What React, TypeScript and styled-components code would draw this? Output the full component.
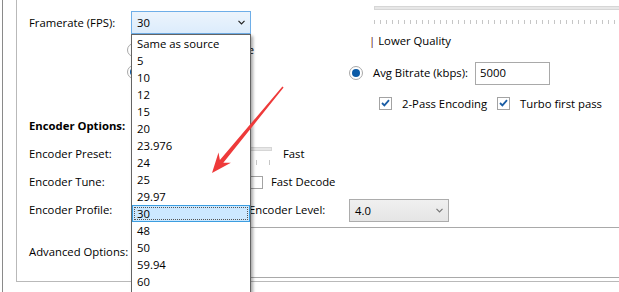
import React from "react";
import styled, { createGlobalStyle } from "styled-components";

const GlobalStyle = createGlobalStyle`
  html, body {
    margin: 0;
    padding: 0;
    background: #fff;
  }
  body {
    width: 619px;
    height: 292px;
    overflow: hidden;
    font-family: "Open Sans", "Noto Sans", sans-serif;
    font-size: 11.3px;
    color: #000;
  }
`;

const Stage = styled.div`
  position: relative;
  width: 619px;
  height: 292px;
  overflow: hidden;
`;

const Window = styled.div`
  margin-left: 2px;
  height: 292px;
  border-left: 1px solid #8a8a8a;
`;

const GroupBox = styled.div`
  margin-left: 13px;
  height: 281px;
  padding-left: 12px;
  border-left: 1px solid #b9b9b9;
  border-bottom: 1px solid #b9b9b9;
`;

const Top = styled.div`
  display: flex;
  height: 115px;
`;

const LeftPane = styled.div`
  width: 320px;
  flex-shrink: 0;
  display: flex;
  flex-direction: column;
`;

const RightPane = styled.div`
  flex: 1;
  min-width: 0;
  display: flex;
  flex-direction: column;
`;

const FieldRow = styled.div`
  margin-top: 11px;
  height: 23px;
  display: flex;
  align-items: center;
`;

const Label = styled.div<{ $w?: number }>`
  width: ${(p) => (p.$w ? `${p.$w}px` : "auto")};
  flex-shrink: 0;
  white-space: nowrap;
  line-height: 16px;
  align-self: center;
`;

const Heading = styled(Label)`
  font-weight: 700;
  grid-column: 1 / -1;
`;

const Combo = styled.div<{ $open?: boolean; $w: number; $h?: number }>`
  position: relative;
  box-sizing: border-box;
  width: ${(p) => p.$w}px;
  height: ${(p) => p.$h ?? 22}px;
  flex-shrink: 0;
  display: flex;
  align-items: center;
  justify-content: space-between;
  padding: 0 5px;
  border: 1px solid ${(p) => (p.$open ? "#6eaee8" : "#acacac")};
  background: ${(p) =>
    p.$open
      ? "linear-gradient(#ecf4fc, #dcecfc)"
      : "linear-gradient(#f0f0f0, #e5e5e5)"};
  color: #000;
`;

const Chevron = ({ color = "#222" }: { color?: string }) => (
  <svg width="7" height="5" viewBox="0 0 7 5">
    <polyline points="0.5,0.8 3.5,3.8 6.5,0.8" fill="none" stroke={color} strokeWidth="1.2" />
  </svg>
);

const DropList = styled.ul`
  position: absolute;
  left: -1px;
  top: calc(100% + 1px);
  width: 120px;
  box-sizing: border-box;
  margin: 0;
  padding: 0;
  list-style: none;
  background: #fff;
  border: 1px solid #646464;
  box-shadow: 2px 2px 3px rgba(0, 0, 0, 0.35);
  z-index: 5;
`;

const DropItem = styled.li<{ $selected?: boolean }>`
  position: relative;
  box-sizing: border-box;
  height: 17px;
  line-height: 17px;
  padding-left: 5px;
  white-space: nowrap;
  ${(p) =>
    p.$selected &&
    `
    background: #cce8ff;
    box-shadow: inset 0 0 0 1px #3d9ee0;
    &::after {
      content: "";
      position: absolute;
      inset: 2px;
      border: 1px dotted #555;
    }
  `}
`;

const RadioRow = styled.div<{ $mt?: number }>`
  margin-top: ${(p) => p.$mt ?? 0}px;
  margin-left: 98px;
  height: 22px;
  display: flex;
  align-items: center;
  gap: 8px;
`;

const Radio = styled.span<{ $checked?: boolean }>`
  box-sizing: border-box;
  width: 14px;
  height: 14px;
  flex-shrink: 0;
  border-radius: 50%;
  border: 1px solid #a8a8a8;
  background: #fff;
  display: flex;
  align-items: center;
  justify-content: center;
  &::after {
    content: "";
    width: 8px;
    height: 8px;
    border-radius: 50%;
    background: ${(p) => (p.$checked ? "#0b5aa6" : "transparent")};
  }
`;

const SliderTrack = styled.div<{ $w: number; $mt: number; $ml?: number }>`
  box-sizing: border-box;
  width: ${(p) => p.$w}px;
  height: 4px;
  margin-top: ${(p) => p.$mt}px;
  margin-left: ${(p) => p.$ml ?? 0}px;
  border: 1px solid #d6d6d6;
  background: #e7e7e7;
  flex-shrink: 0;
`;

const Ticks = styled.div<{ $w: number; $mt: number; $ml?: number; $step: number; $h: number; $fromRight?: boolean }>`
  width: ${(p) => p.$w}px;
  height: ${(p) => p.$h}px;
  margin-top: ${(p) => p.$mt}px;
  margin-left: ${(p) => p.$ml ?? 0}px;
  background: repeating-linear-gradient(
    ${(p) => (p.$fromRight ? "to left" : "to right")},
    transparent 0 ${(p) => (p.$fromRight ? 2 : 0)}px,
    #c6c6c6 ${(p) => (p.$fromRight ? 2 : 0)}px ${(p) => (p.$fromRight ? 3 : 1)}px,
    transparent ${(p) => (p.$fromRight ? 3 : 1)}px ${(p) => p.$step}px
  );
`;

const Note = styled.div`
  margin-top: 9px;
  margin-left: 20px;
  line-height: 16px;
  white-space: nowrap;
  span {
    color: #5a1010;
    margin-right: 3px;
  }
`;

const BitrateRow = styled.div`
  margin-top: 13px;
  height: 22px;
  display: flex;
  align-items: center;
`;

const TextBox = styled.div<{ $w: number; $h: number }>`
  box-sizing: border-box;
  width: ${(p) => p.$w}px;
  height: ${(p) => p.$h}px;
  flex-shrink: 0;
  border: 1px solid #a9a9a9;
  background: #fff;
  padding: 2px 4px;
  line-height: 16px;
`;

const CheckRow = styled.div`
  margin-top: 11px;
  margin-left: 30px;
  height: 16px;
  display: flex;
  align-items: center;
`;

const CheckItem = styled.div<{ $w?: number }>`
  width: ${(p) => (p.$w ? `${p.$w}px` : "auto")};
  flex-shrink: 0;
  display: flex;
  align-items: center;
  gap: 10px;
  white-space: nowrap;
`;

const Box = styled.span`
  box-sizing: border-box;
  width: 13px;
  height: 13px;
  flex-shrink: 0;
  border: 1px solid #a3a3a3;
  background: #fff;
  display: flex;
  align-items: center;
  justify-content: center;
`;

const CheckBox = ({ checked }: { checked?: boolean }) => (
  <Box>
    {checked && (
      <svg width="9" height="8" viewBox="0 0 9 8">
        <polyline points="1,4 3.4,6.4 8,1.2" fill="none" stroke="#1a5da5" strokeWidth="1.8" />
      </svg>
    )}
  </Box>
);

const Options = styled.div`
  display: grid;
  grid-template-columns: 102px 1fr;
  grid-template-rows: 22px 22px 22px 22px 50px;
  row-gap: 6px;
`;

const Control = styled.div`
  display: flex;
  align-items: center;
  min-width: 0;
`;

const PresetSlider = styled.div`
  align-self: stretch;
  display: flex;
  flex-direction: column;
`;

const Spacer = styled.div<{ $w: number }>`
  width: ${(p) => p.$w}px;
  flex-shrink: 0;
`;

const Arrow = styled.svg`
  position: absolute;
  left: 0;
  top: 0;
  z-index: 10;
  pointer-events: none;
`;

const rates = [
  "Same as source", "5", "10", "12", "15", "20", "23.976", "24", "25", "29.97",
  "30", "48", "50", "59.94", "60", "72", "75",
];

export default function App() {
  return (
    <>
      <GlobalStyle />
      <Stage>
        <Window>
          <GroupBox>
            <Top>
              <LeftPane>
                <FieldRow>
                  <Label $w={102}>Framerate (FPS):</Label>
                  <Combo $open $w={120} $h={23}>
                    <span>30</span>
                    <Chevron />
                    <DropList>
                      {rates.map((r) => (
                        <DropItem key={r} $selected={r === "30"}>{r}</DropItem>
                      ))}
                    </DropList>
                  </Combo>
                </FieldRow>
                <RadioRow $mt={5}>
                  <Radio />
                  <Label>Constant Framerate</Label>
                </RadioRow>
                <RadioRow>
                  <Radio $checked />
                  <Label>Peak Framerate</Label>
                </RadioRow>
              </LeftPane>
              <RightPane>
                <SliderTrack $w={300} $mt={6} $ml={25} />
                <Ticks $w={300} $h={4} $mt={10} $ml={25} $step={6} />
                <Note><span>|</span>Lower Quality</Note>
                <BitrateRow>
                  <Radio $checked />
                  <Spacer $w={10} />
                  <Label $w={102}>Avg Bitrate (kbps):</Label>
                  <TextBox $w={75} $h={23}>5000</TextBox>
                </BitrateRow>
                <CheckRow>
                  <CheckItem $w={118}>
                    <CheckBox checked />
                    <span>2-Pass Encoding</span>
                  </CheckItem>
                  <CheckItem>
                    <CheckBox checked />
                    <span>Turbo first pass</span>
                  </CheckItem>
                </CheckRow>
              </RightPane>
            </Top>
            <Options>
              <Heading>Encoder Options:</Heading>

              <Label>Encoder Preset:</Label>
              <Control>
                <PresetSlider>
                  <SliderTrack $w={141} $mt={4} />
                  <Ticks $w={141} $h={5} $mt={9} $step={13} $fromRight />
                </PresetSlider>
                <Spacer $w={11} />
                <Label>Fast</Label>
              </Control>

              <Label>Encoder Tune:</Label>
              <Control>
                <Combo $w={110}>
                  <span />
                  <Chevron color="#777" />
                </Combo>
                <Spacer $w={9} />
                <CheckBox />
                <Spacer $w={8} />
                <Label>Fast Decode</Label>
              </Control>

              <Label>Encoder Profile:</Label>
              <Control>
                <Combo $w={110}>
                  <span />
                  <Chevron color="#777" />
                </Combo>
                <Spacer $w={8} />
                <Label $w={100}>Encoder Level:</Label>
                <Combo $w={100} $h={23}>
                  <span>4.0</span>
                  <Chevron color="#777" />
                </Combo>
              </Control>

              <Label>Advanced Options:</Label>
              <Control>
                <TextBox $w={520} $h={51} />
              </Control>
            </Options>
          </GroupBox>
        </Window>
        <Arrow width="619" height="292" viewBox="0 0 619 292">
          <polygon
            points="283.6,87.4 223.3,162.8 230.9,162.7 212,173 218.5,152.5 219.9,160 282.4,86.6"
            fill="#ee3a3a"
          />
        </Arrow>
      </Stage>
    </>
  );
}
